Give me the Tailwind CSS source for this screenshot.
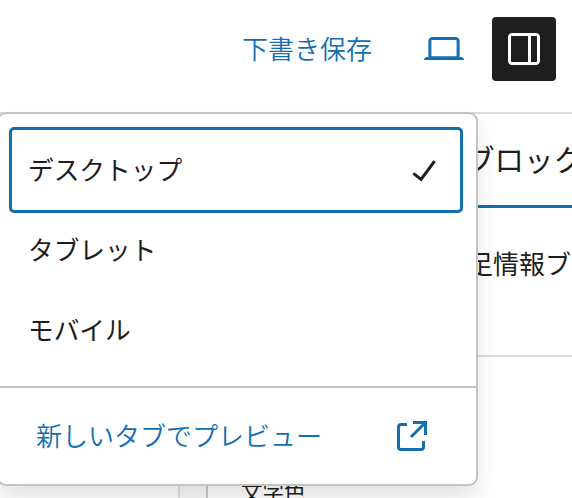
<!DOCTYPE html>
<html lang="ja">
<head>
    <meta charset="UTF-8">
    <title>プレビュー</title>
    <script src="https://cdn.jsdelivr.net/npm/@tailwindcss/browser@4"></script>
</head>

<body class="w-[572px] h-[498px] overflow-hidden bg-white font-['Noto_Sans_CJK_JP',sans-serif] text-[26px] text-[#1e1e1e]">
    <div class="relative flex flex-col w-[572px] h-[498px] overflow-hidden">
        <!-- Header -->
        <header class="flex items-center justify-end h-[114px] pr-4 pb-3.5 border-b-2 border-[#ddd] shrink-0">
            <button class="mr-12 pb-0.5 font-[350] leading-10 text-[#126fb0] whitespace-nowrap">下書き保存</button>
            <button class="mr-6">
                <svg class="size-12 fill-[#126fb0]" viewBox="0 0 24 24"><path d="M20.5 16h-.7V8c0-1.1-.9-2-2-2H6.2c-1.1 0-2 .9-2 2v8h-.7c-.8 0-1.5.7-1.5 1.5h20c0-.8-.7-1.5-1.5-1.5zM5.7 8c0-.3.2-.5.5-.5h11.6c.3 0 .5.2.5.5v7.6H5.7V8z"/></svg>
            </button>
            <button class="flex items-center justify-center size-16 rounded-[4px] bg-[#1e1e1e]">
                <svg class="size-12 fill-white" viewBox="0 0 24 24"><path d="M18 4H6c-1.1 0-2 .9-2 2v12c0 1.1.9 2 2 2h12c1.1 0 2-.9 2-2V6c0-1.1-.9-2-2-2zm-4 14.5H6c-.3 0-.5-.2-.5-.5V6c0-.3.2-.5.5-.5h8v13zm4.5-.5c0 .3-.2.5-.5.5h-2.5v-13H18c.3 0 .5.2.5.5v12z"/></svg>
            </button>
        </header>

        <!-- Canvas and settings sidebar -->
        <main class="flex flex-1 min-h-0">
            <div class="w-[178px] shrink-0 bg-white"></div>
            <div class="w-[30px] shrink-0 border-l-2 border-r-2 border-l-[#e0e0e0] border-r-[#c8c8c8] bg-[#fafafa]"></div>
            <aside class="w-[364px] shrink-0 overflow-hidden whitespace-nowrap">
                <div class="h-[94px] pl-[257px] pt-[21px] border-b-[3px] border-[#126fb0] text-[29.5px] leading-[46px]">ブロック</div>
                <div class="h-[149px] pl-[259px] pt-[35px] border-b-2 border-[#ddd] leading-10">足情報ブロック</div>
                <div class="pl-[33px] pt-[118px] text-[21.5px] leading-8">文字色</div>
            </aside>
        </main>

        <!-- Preview menu -->
        <div class="absolute -left-[3px] top-[112px] w-[481px] h-[374px] flex flex-col rounded-[9px] border-2 border-[#c3c3c3] bg-white shadow-[0_14px_24px_-2px_rgba(0,0,0,0.12)]">
            <div class="flex flex-col h-[272px] pt-[13px] pl-[10px] pr-[13px] shrink-0 text-[25.7px]">
                <button class="flex items-center justify-between h-[86px] pl-4 pr-3 rounded-[5px] border-[3px] border-[#126fb0]">
                    <span class="pb-0.5">デスクトップ</span>
                    <svg class="size-12 fill-[#1e1e1e]" viewBox="0 0 24 24"><path d="M16.7 7.1l-6.3 8.5-3.3-2.5-.9 1.2 4.5 3.4L17.9 8z"/></svg>
                </button>
                <button class="h-[74px] pl-[19px] pb-0.5 text-left">タブレット</button>
                <button class="h-[86px] pl-[19px] pb-0.5 text-left">モバイル</button>
            </div>
            <a class="flex flex-1 items-center justify-between pl-[37px] pr-[40px] border-t-2 border-[#c3c3c3] font-[350] text-[#126fb0]">
                <span class="pb-1">新しいタブでプレビュー</span>
                <svg class="size-12 fill-[#126fb0]" viewBox="0 0 24 24"><path d="M19.5 4.5h-7V6h4.44l-5.97 5.97 1.06 1.06L18 7.06v4.44h1.5v-7Zm-13 1a2 2 0 0 0-2 2v10a2 2 0 0 0 2 2h10a2 2 0 0 0 2-2v-3H17v3a.5.5 0 0 1-.5.5h-10a.5.5 0 0 1-.5-.5v-10a.5.5 0 0 1 .5-.5h3V5.5h-3Z"/></svg>
            </a>
        </div>
    </div>
</body>
</html>
